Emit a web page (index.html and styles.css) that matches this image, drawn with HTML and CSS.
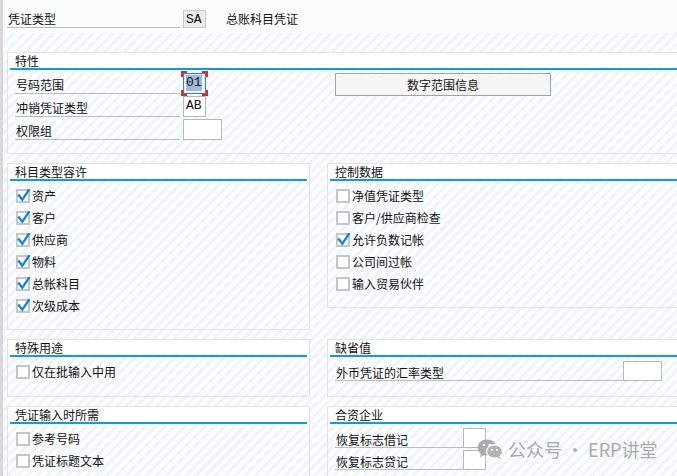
FILE: index.html
```html
<!DOCTYPE html>
<html>
<head>
<title>凭证类型</title>
<link rel="stylesheet" href="styles.css">
</head>
<body>
<div class="screen">
	<div class="head">
		<span class="field-label">凭证类型</span>
		<span class="box box-ro">SA</span>
		<span class="head-text">总账科目凭证</span>
	</div>

	<section class="group group-wide">
		<div class="group-title">特性</div>
		<div class="rule"></div>
		<div class="group-body attrs">
			<div class="fields">
				<div class="field"><span class="field-label">号码范围</span><span class="box box-focus"><span class="sel">01</span></span></div>
				<div class="field"><span class="field-label">冲销凭证类型</span><span class="box">AB</span></div>
				<div class="field"><span class="field-label">权限组</span><span class="box box-wide"></span></div>
			</div>
			<button class="btn">数字范围信息</button>
		</div>
	</section>

	<div class="groups">
		<section class="group">
			<div class="group-title">科目类型容许</div>
			<div class="rule"></div>
			<div class="group-body checks">
				<label class="check"><span class="cb on"></span>资产</label>
				<label class="check"><span class="cb on"></span>客户</label>
				<label class="check"><span class="cb on"></span>供应商</label>
				<label class="check"><span class="cb on"></span>物料</label>
				<label class="check"><span class="cb on"></span>总帐科目</label>
				<label class="check"><span class="cb on"></span>次级成本</label>
			</div>
		</section>

		<section class="group">
			<div class="group-title">控制数据</div>
			<div class="rule"></div>
			<div class="group-body checks">
				<label class="check"><span class="cb"></span>净值凭证类型</label>
				<label class="check"><span class="cb"></span>客户/供应商检查</label>
				<label class="check"><span class="cb on"></span>允许负数记帐</label>
				<label class="check"><span class="cb"></span>公司间过帐</label>
				<label class="check"><span class="cb"></span>输入贸易伙伴</label>
			</div>
		</section>

		<section class="group">
			<div class="group-title">特殊用途</div>
			<div class="rule"></div>
			<div class="group-body checks single">
				<label class="check"><span class="cb"></span>仅在批输入中用</label>
			</div>
		</section>

		<section class="group">
			<div class="group-title">缺省值</div>
			<div class="rule"></div>
			<div class="group-body values">
				<div class="field"><span class="field-label long">外币凭证的汇率类型</span><span class="box box-wide"></span></div>
			</div>
		</section>

		<section class="group">
			<div class="group-title">凭证输入时所需</div>
			<div class="rule"></div>
			<div class="group-body checks">
				<label class="check"><span class="cb"></span>参考号码</label>
				<label class="check"><span class="cb"></span>凭证标题文本</label>
			</div>
		</section>

		<section class="group">
			<div class="group-title">合资企业</div>
			<div class="rule"></div>
			<div class="group-body values">
				<div class="field"><span class="field-label mid">恢复标志借记</span><span class="box"></span></div>
				<div class="field"><span class="field-label mid">恢复标志贷记</span><span class="box"></span></div>
			</div>
		</section>
	</div>
</div>

<div class="watermark">
	<svg class="wm-icon" width="26" height="20" viewBox="0 0 26 20">
		<ellipse cx="10" cy="8.5" rx="9.5" ry="8" fill="#ababab"/>
		<path d="M4 14 L3 18.5 L8 15.5 Z" fill="#ababab"/>
		<ellipse cx="17.5" cy="12.5" rx="8" ry="6.8" fill="#b3b3b3" stroke="#f6f8f9" stroke-width="1.4"/>
		<path d="M22 17 L24 19.6 L19.5 18.3 Z" fill="#b3b3b3"/>
		<circle cx="7" cy="6" r="1.3" fill="#f6f8f9"/>
		<circle cx="12.5" cy="6" r="1.3" fill="#f6f8f9"/>
		<circle cx="15" cy="11" r="1.1" fill="#f6f8f9"/>
		<circle cx="20" cy="11" r="1.1" fill="#f6f8f9"/>
	</svg>
	<span>公众号 · ERP讲堂</span>
</div>
</body>
</html>
```

FILE: styles.css
```css
html, body {
	margin: 0;
	height: 100%;
}

body {
	background-color: #f8fafb;
	background-image: repeating-linear-gradient(135deg, #fcfdfe 0, #fcfdfe 4px, #f1f5f8 4px, #f1f5f8 7px);
	color: #111;
	font-family: "Noto Sans CJK SC", sans-serif;
	font-size: 12px;
	overflow: hidden;
	position: relative;
}

.screen {
	border-left: 3px solid #d8d8d8;
	height: 100%;
	padding-left: 4px;
}

/* header line above the groups */
.head {
	align-items: flex-end;
	background-color: #fbfcfc;
	display: flex;
	height: 28px;
	margin-left: -4px;
	padding-bottom: 5px;
	padding-left: 4px;
}

.head .field-label {
	width: 173px;
}

.head .box {
	height: 18px;
}

.head-text {
	align-self: center;
	margin-left: 20px;
	margin-top: 8px;
}

.field-label {
	border-bottom: 1px solid #bcbcbc;
	box-sizing: border-box;
	display: block;
	height: 20px;
	line-height: 18px;
	padding-left: 1px;
	padding-top: 2px;
	width: 165px;
}

.box {
	background-color: #fff;
	border: 1px solid #b8b8b8;
	box-sizing: border-box;
	display: block;
	font-family: "Liberation Mono", monospace;
	font-size: 13px;
	height: 20px;
	line-height: 18px;
	margin-left: 3px;
	padding-left: 2px;
	position: relative;
	width: 23px;
}

.box-ro {
	background-color: #ebebeb;
	border-color: #cacaca;
}

.box-wide {
	width: 39px;
}

.box-focus {
	border-color: #3d7fc1;
	box-shadow: inset 0 0 0 1px #dfeaf5;
}

.box-focus .sel {
	background-color: #9fbadb;
	display: inline-block;
	line-height: 16px;
	margin-top: 1px;
}

/* red corner marks round the focused field */
.box-focus::before {
	background:
		linear-gradient(#e0261f, #e0261f) left top / 6px 2px no-repeat,
		linear-gradient(#e0261f, #e0261f) left top / 2px 6px no-repeat,
		linear-gradient(#e0261f, #e0261f) right top / 6px 2px no-repeat,
		linear-gradient(#e0261f, #e0261f) right top / 2px 6px no-repeat,
		linear-gradient(#e0261f, #e0261f) left bottom / 6px 2px no-repeat,
		linear-gradient(#e0261f, #e0261f) left bottom / 2px 6px no-repeat,
		linear-gradient(#e0261f, #e0261f) right bottom / 6px 2px no-repeat,
		linear-gradient(#e0261f, #e0261f) right bottom / 2px 6px no-repeat;
	bottom: -3px;
	content: "";
	left: -3px;
	position: absolute;
	right: -3px;
	top: -3px;
}

/* group boxes */
.group {
	border: 1px solid #dde3e6;
	box-sizing: border-box;
}

.group-wide {
	margin-right: -4px;
	margin-top: 19px;
}

.group-title {
	background-color: #fff;
	height: 15px;
	line-height: 15px;
	padding-left: 7px;
}

.rule {
	background-color: #0a9de0;
	height: 2px;
	margin: 0 2px;
}

.attrs {
	display: flex;
	padding: 3px 0 13px 7px;
}

.fields {
	display: flex;
	flex-direction: column;
	gap: 2px;
	width: 320px;
}

.field {
	align-items: flex-end;
	display: flex;
}

.field .field-label {
	height: 21px;
	line-height: 19px;
}

.field .box {
	height: 21px;
}

.btn {
	background-color: #f5f5f5;
	border: 1px solid #a3a3a3;
	color: #111;
	font-family: "Noto Sans CJK SC", sans-serif;
	font-size: 12px;
	height: 23px;
	padding: 0;
	width: 216px;
}

.groups {
	column-gap: 17px;
	display: grid;
	grid-template-columns: 303px 360px;
	margin-top: 9px;
	row-gap: 9px;
	align-items: start;
}

.checks {
	padding: 4px 0 12px 8px;
}

.checks.single {
	padding-bottom: 13px;
}

.check {
	align-items: center;
	display: flex;
	height: 22px;
	line-height: 22px;
}

.cb {
	background-color: #fff;
	border: 2px solid #c6c6c6;
	box-sizing: border-box;
	height: 14px;
	margin-right: 2px;
	position: relative;
	width: 14px;
}

.cb.on::after {
	background: url("data:image/svg+xml,%3Csvg xmlns='http://www.w3.org/2000/svg' width='14' height='14' viewBox='0 0 14 14'%3E%3Cpath d='M2 6.5 L5.3 10.8 L11.8 1' fill='none' stroke='%231a86d2' stroke-width='2.4' stroke-linecap='square'/%3E%3C/svg%3E") no-repeat;
	content: "";
	height: 14px;
	left: -1px;
	position: absolute;
	top: -2px;
	width: 14px;
}

.values {
	display: flex;
	flex-direction: column;
	gap: 2px;
	padding: 4px 0 15px 7px;
}

.values .field-label,
.values .box {
	height: 20px;
}

.values .box {
	margin-left: 0;
}

.field-label.long {
	width: 288px;
}

.field-label.mid {
	width: 128px;
}

/* account watermark in the lower right corner */
.watermark {
	align-items: center;
	color: #a9a9a9;
	display: flex;
	font-family: "Noto Sans CJK SC", sans-serif;
	font-size: 18px;
	gap: 5px;
	left: 477px;
	position: absolute;
	top: 436px;
}
```
